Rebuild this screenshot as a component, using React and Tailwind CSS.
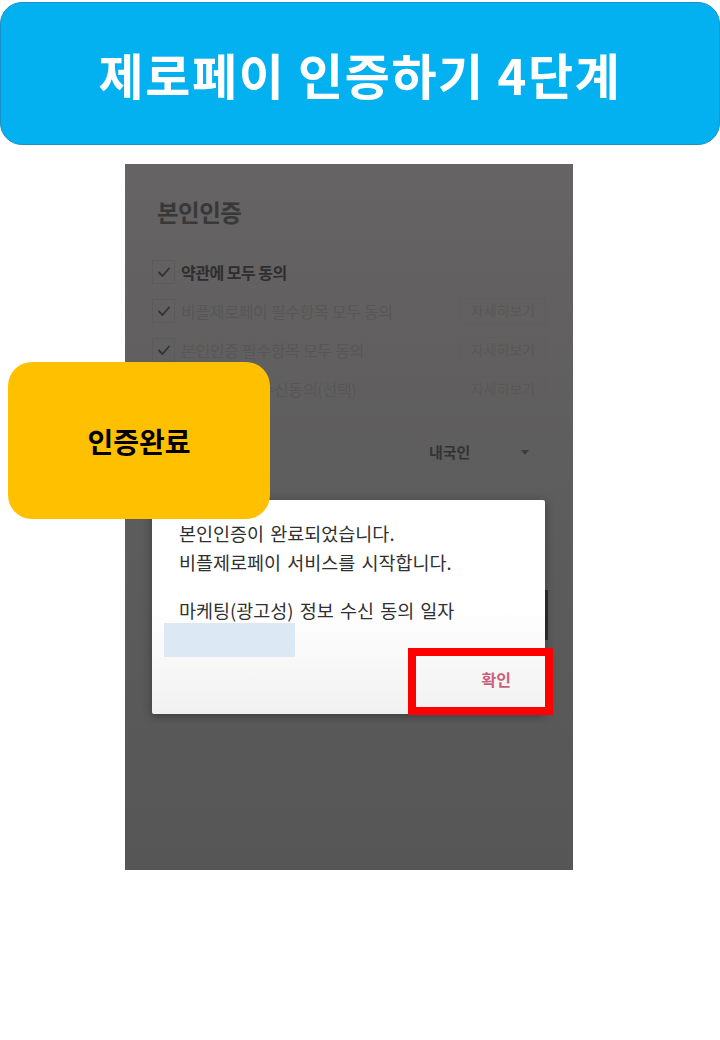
const font = { fontFamily: '"Noto Sans CJK KR", "Noto Sans", sans-serif' };

const Check = () => (
    <div className="w-[23px] h-[24px] border border-[#5b5b5b] flex items-center justify-center">
        <svg width="14" height="14" viewBox="0 0 14 14" fill="none">
            <path d="M2 7.5 L5.5 11 L12 3.5" stroke="#333" strokeWidth="1.8" strokeLinecap="round" strokeLinejoin="round" />
        </svg>
    </div>
);

const TermRow = ({ label, bold, more }) => (
    <div className="flex items-center h-[39px]">
        <Check />
        <span className={bold ? "ml-[6px] text-[16px] font-bold text-[#2e2e2e] tracking-[-0.5px]" : "ml-[6px] text-[16px] text-[#575757] tracking-[-0.3px]"}>
            {label}
        </span>
        {more && (
            <div className="ml-auto w-[86px] h-[26px] border border-[#5e5e5e] flex items-center justify-center text-[14px] text-[#585858]">
                자세히보기
            </div>
        )}
    </div>
);

export default function App() {
    return (
        <div className="w-[720px] h-[1040px] bg-white relative" style={font}>
            <div className="mt-[2px] h-[143px] rounded-[22px] bg-[#03b0f0] border border-[#1c8fc4] flex items-center justify-center">
                <h1 className="text-white font-bold text-[49px] tracking-[1.6px] leading-none">제로페이 인증하기 4단계</h1>
            </div>

            <div className="ml-[125px] mt-[19px] w-[448px] h-[706px] relative bg-gradient-to-b from-[#656363] to-[#565656]">
                <div className="px-[27px] pt-[33px]">
                    <h2 className="pl-[5px] text-[23.5px] leading-[30px] font-bold text-[#383838] tracking-[-0.5px]">본인인증</h2>
                    <div className="mt-[25px] flex flex-col">
                        <TermRow label="약관에 모두 동의" bold />
                        <TermRow label="비플제로페이 필수항목 모두 동의" more />
                        <TermRow label="본인인증 필수항목 모두 동의" more />
                        <TermRow label="광고성 정보 수신동의(선택)" more />
                    </div>
                    <div className="mt-[18px] flex gap-3 border-t border-[#5e5e5e]">
                        <div className="flex-1 h-[48px] border-b border-[#5e5e5e]" />
                        <div className="w-[130px] h-[47px] border border-[#5e5e5e] flex items-center pl-3 pr-4 mt-[2px]">
                            <span className="text-[15px] font-bold text-[#333]">내국인</span>
                            <svg className="ml-auto" width="8" height="5" viewBox="0 0 8 5">
                                <path d="M0 0 L8 0 L4 5 Z" fill="#3c3c3c" />
                            </svg>
                        </div>
                    </div>
                </div>

                <div className="absolute left-[420px] top-[426px] w-[3px] h-[50px] bg-[#2e2e2e]" />

                <div className="absolute left-[27px] top-[336px] w-[393px] h-[214px] bg-gradient-to-b from-white via-white to-[#f1f1f1] shadow-[0_2px_10px_rgba(0,0,0,0.35)] rounded-[2px]">
                    <div className="pl-[27px] pt-[19px] text-[18.5px] text-[#303030] leading-[29px] [word-spacing:2px]">
                        <p>본인인증이 완료되었습니다.</p>
                        <p>비플제로페이 서비스를 시작합니다.</p>
                        <p className="mt-[19px]">마케팅(광고성) 정보 수신 동의 일자</p>
                    </div>
                    <div className="ml-[12px] mt-[-2px] w-[131px] h-[34px] bg-[#dce8f4]" />
                    <div className="absolute right-[34px] top-[167px] text-[16px] font-bold text-[#c9607a]">확인</div>
                </div>

                <div className="absolute left-[283px] top-[484px] w-[145px] h-[67px] border-[8px] border-[#ff0000]" />
            </div>

            <div className="absolute left-[8px] top-[360px] w-[262px] h-[157px] rounded-[24px] bg-[#ffc000] flex items-center justify-center">
                <span className="text-[28px] font-bold text-black">인증완료</span>
            </div>
        </div>
    );
}
